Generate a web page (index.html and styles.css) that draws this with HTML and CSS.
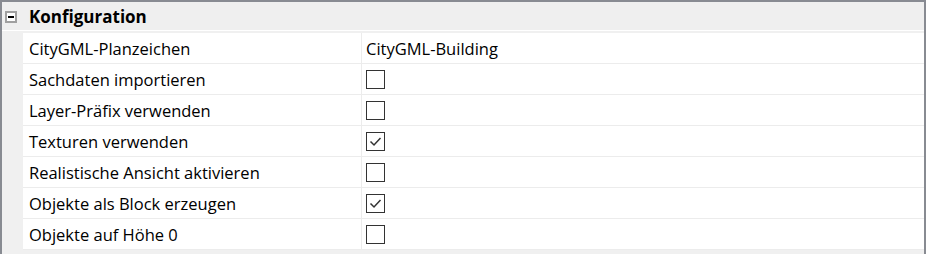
FILE: index.html
```html
<!DOCTYPE html>
<html lang="de">
<head>
<meta charset="utf-8">
<link rel="stylesheet" href="styles.css">
</head>
<body>
<div class="panel">
  <div class="header">
    <span class="toggle"><span class="minus"></span></span>
    <span class="title">Konfiguration</span>
  </div>
  <div class="body">
    <div class="gutter"></div>
    <div class="rows">
      <div class="row"><div class="name">CityGML-Planzeichen</div><div class="value">CityGML-Building</div></div>
      <div class="row"><div class="name">Sachdaten importieren</div><div class="value"><span class="cb"></span></div></div>
      <div class="row"><div class="name">Layer-Präfix verwenden</div><div class="value"><span class="cb"></span></div></div>
      <div class="row"><div class="name">Texturen verwenden</div><div class="value"><span class="cb checked"><svg viewBox="0 0 19 19" width="19" height="19"><path d="M4.5 9.5 L8 13 L14.5 6" fill="none" stroke="#333" stroke-width="1.5"/></svg></span></div></div>
      <div class="row"><div class="name">Realistische Ansicht aktivieren</div><div class="value"><span class="cb"></span></div></div>
      <div class="row"><div class="name">Objekte als Block erzeugen</div><div class="value"><span class="cb checked"><svg viewBox="0 0 19 19" width="19" height="19"><path d="M4.5 9.5 L8 13 L14.5 6" fill="none" stroke="#333" stroke-width="1.5"/></svg></span></div></div>
      <div class="row"><div class="name">Objekte auf Höhe 0</div><div class="value"><span class="cb"></span></div></div>
    </div>
  </div>
</div>
</body>
</html>
```
FILE: styles.css
```css
html, body {
  margin: 0;
  padding: 0;
  background: #ffffff;
}
.panel {
  width: 926px;
  height: 254px;
  box-sizing: border-box;
  border-top: 2px solid #888b92;
  border-left: 2px solid #888b92;
  border-right: 2px solid #888b92;
  background: #f0f0f0;
  font-family: "Open Sans", "Noto Sans", sans-serif;
  color: #000;
  overflow: hidden;
}
.header {
  height: 28px;
  display: flex;
  align-items: center;
  background: #efefef;
  border-bottom: 1px solid #ffffff;
}
.toggle {
  width: 8px;
  height: 8px;
  margin-left: 3px;
  margin-top: 2px;
  border: 2px solid #a0a0a0;
  background: #fff;
  box-sizing: content-box;
  display: flex;
  align-items: center;
  justify-content: center;
}
.minus {
  width: 6px;
  height: 2px;
  background: #000;
}
.title {
  margin-left: 12px;
  font-weight: 700;
  font-size: 17px;
  letter-spacing: 0;
}
.body {
  display: flex;
  border-top: 2px solid #f0f0f0;
}
.gutter {
  width: 21px;
  flex: none;
}
.rows {
  flex: 1;
  background: #fff;
}
.row {
  height: 30px;
  display: flex;
  border-bottom: 1px solid #ececec;
  font-size: 16.5px;
}
.name {
  width: 339px;
  padding-left: 6px;
  box-sizing: border-box;
  border-right: 1px solid #ececec;
  display: flex;
  align-items: center;
}
.value {
  flex: 1;
  padding-left: 4px;
  display: flex;
  align-items: center;
}
.cb {
  width: 19px;
  height: 19px;
  border: 1px solid #333;
  box-sizing: border-box;
  position: relative;
  display: block;
  margin-top: 1px;
  margin-left: 0;
}
.cb svg {
  position: absolute;
  left: -1px;
  top: -1px;
}
```
